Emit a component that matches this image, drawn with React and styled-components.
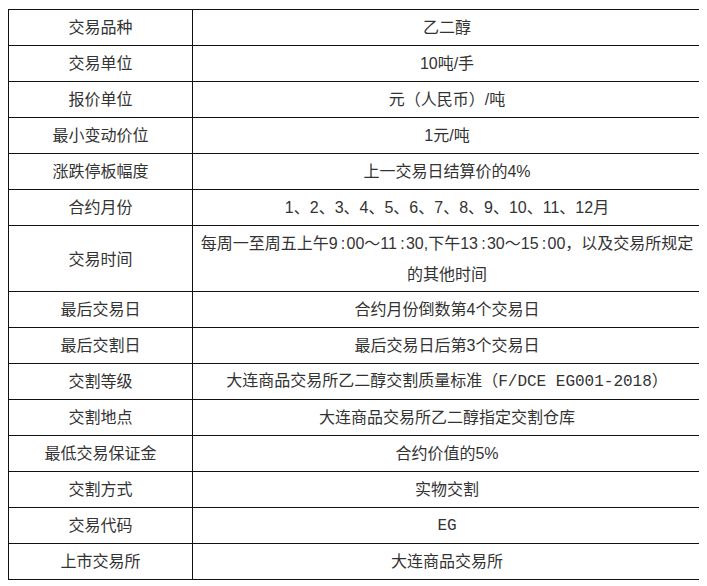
import React from 'react';
import styled, { createGlobalStyle } from 'styled-components';

const GlobalStyle = createGlobalStyle`
    body {
        margin: 8px;
        background: #fff;
        font-family: "Liberation Sans", "Noto Sans CJK SC", sans-serif;
    }
`;

const Table = styled.table`
    width: 694px;
    margin-top: 1px;
    border-collapse: collapse;
    table-layout: fixed;
    color: #333;
    font-size: 16px;
`;

const Cell = styled.td`
    border: 1px solid #111;
    height: 36px;
    padding: ${p => (p.$tall ? '2px 4px 1px' : '0 4px')};
    text-align: center;
    vertical-align: middle;
    line-height: ${p => (p.$tall ? '31px' : '22px')};
    box-sizing: border-box;
`;

const LabelCell = styled(Cell)`
    width: 184px;
`;

const Mono = styled.span`
    font-family: "Liberation Mono", "DejaVu Sans Mono", monospace;
`;

// the source spaces out the colons in clock times
const time = t => t.replace(':', '\u2009:\u200a');

const rows = [
    ['交易品种', '乙二醇'],
    ['交易单位', '10吨/手'],
    ['报价单位', '元（人民币）/吨'],
    ['最小变动价位', '1元/吨'],
    ['涨跌停板幅度', '上一交易日结算价的4%'],
    ['合约月份', '1、2、3、4、5、6、7、8、9、10、11、12月'],
    ['交易时间', `每周一至周五上午${time('9:00')}～${time('11:30')},下午${time('13:30')}～${time('15:00')}，以及交易所规定的其他时间`, true],
    ['最后交易日', '合约月份倒数第4个交易日'],
    ['最后交割日', '最后交易日后第3个交易日'],
    ['交割等级', <>大连商品交易所乙二醇交割质量标准（<Mono>F/DCE EG001-2018</Mono>）</>],
    ['交割地点', '大连商品交易所乙二醇指定交割仓库'],
    ['最低交易保证金', '合约价值的5%'],
    ['交割方式', '实物交割'],
    ['交易代码', <Mono>EG</Mono>],
    ['上市交易所', '大连商品交易所'],
];

const App = () => (
    <>
        <GlobalStyle />
        <Table>
            <tbody>
                {rows.map(([label, value, tall]) =>
                    <tr key={label}>
                        <LabelCell $tall={tall}>{label}</LabelCell>
                        <Cell $tall={tall}>{value}</Cell>
                    </tr>
                )}
            </tbody>
        </Table>
    </>
);

export default App;
